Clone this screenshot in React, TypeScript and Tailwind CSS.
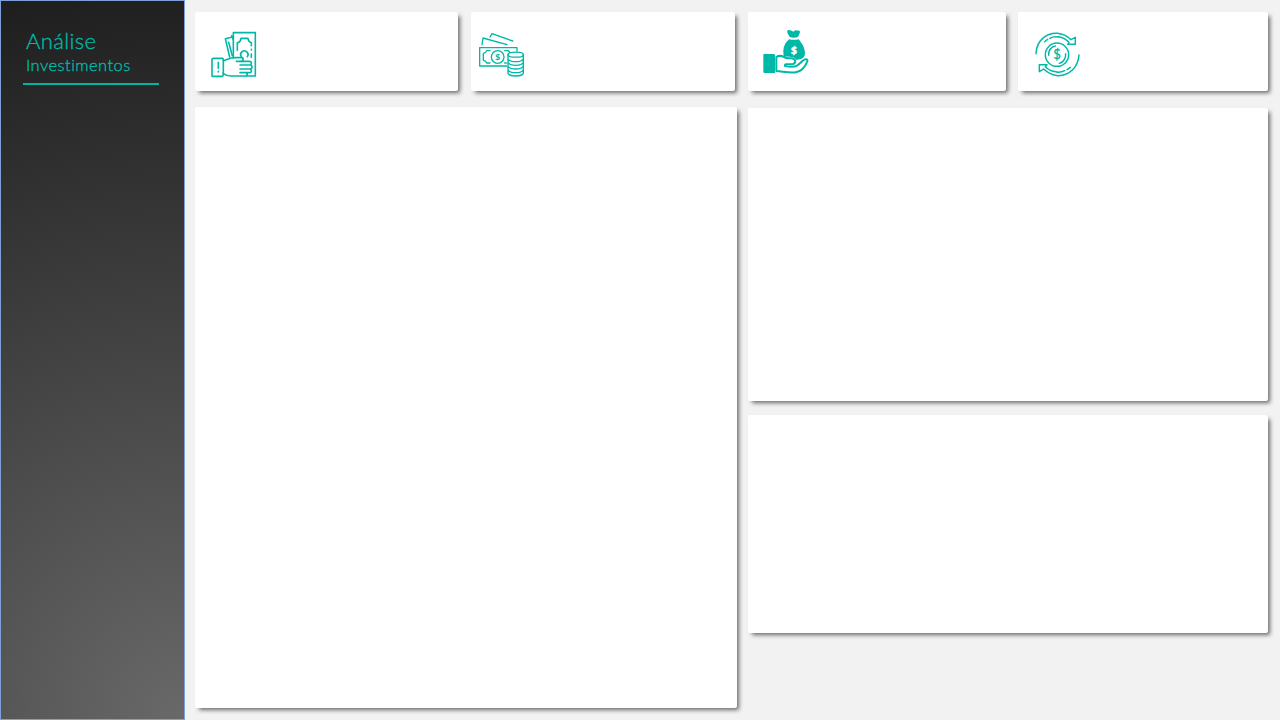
import type { ReactNode } from "react";

const iconClass = "block h-14 w-[60px] shrink-0 text-[#00b8a8]";

function LineIcon({ children }: { children: ReactNode }) {
  return (
    <svg viewBox="0 0 180 168" className={iconClass} fill="none" stroke="currentColor" strokeWidth="4.8" strokeLinejoin="round" strokeLinecap="round">
      {children}
    </svg>
  );
}

function CashInHandIcon() {
  return (
    <LineIcon>
      <path d="M88 99V23H154V153H81Q68 153 57 145" />
      <path d="M88 35 64 41 77 96M83 32 88 44M74 52 85 92" />
      <path d="M55 154H24V103Q24 100 28 100H55Q58 100 58 104V149Q58 154 53 154" />
      <path d="M58 107 82 99Q87 98 94 98H116Q120 104 114 109H97" />
      <path d="M111 109H136Q142 109 142 115T136 120H108M112 120H138Q144 120 144 126T138 132H108M112 132H136Q142 132 142 138T136 143H108M112 143H128Q132 148 127 153" />
      <path d="M100 76V53Q110 51 111 40H132Q133 50 142 53V62M142 73V75M142 87V97" />
      <path d="M112 95A11 11 0 1 1 130 95" />
      <path d="M43 112V130M43 139V141" />
    </LineIcon>
  );
}

function BillsAndCoinsIcon() {
  return (
    <LineIcon>
      <g strokeWidth="4">
        <path d="M104 123H23V68H135V78M30 59 33 39 105 59M54 36 60 26 122 48" />
        <path d="M54 77H44Q42 84 34 85V106Q42 107 44 114H54" />
        <path d="M98 77H108Q112 79 114 83M98 114H103" />
        <circle cx="77" cy="96" r="19" />
        <ellipse cx="131" cy="89" rx="23" ry="7.5" />
        <path d="M108 89V144Q110 153 131 153T154 144V89M108 101Q112 110 131 110T154 101M108 112Q112 121 131 121T154 112M108 123Q112 132 131 132T154 123M108 134Q112 143 131 143T154 134" />
      </g>
      <text x="77" y="105" textAnchor="middle" fill="currentColor" stroke="none" className="font-['Lato'] text-[25px] font-black">$</text>
    </LineIcon>
  );
}

function MoneyBagIcon() {
  return (
    <svg viewBox="0 0 180 168" className={iconClass} fill="currentColor">
      <path d="M101 39 94 26Q92 18 98 18 106 19 112 23 119 17 126 20 132 17 132 25L126 39Q114 44 101 39Z" />
      <path d="M99 46Q114 49 128 46C138 58 147 72 147 88 147 97 142 104 135 105L122 108Q115 98 101 98L83 97Q77 65 99 46Z" />
      <path d="M23 90H53Q57 90 57 94V147H26Q22 147 22 143V94Q22 90 23 90Z" />
      <path d="M61 99C76 89 83 101 95 103H107Q118 105 118 113 117 121 104 121H91Q85 122 87 126 90 128 106 128C125 128 128 121 140 110 149 103 156 105 154 112 149 125 137 142 119 145 104 148 83 143 61 141Z" fill="white" stroke="currentColor" strokeWidth="6" strokeLinejoin="round" />
      <text x="114" y="90" textAnchor="middle" fill="white" stroke="white" strokeWidth="1.5" className="font-['Lato'] text-[30px] font-black">$</text>
    </svg>
  );
}

function MoneyCycleIcon() {
  return (
    <LineIcon>
      <g strokeWidth="4.4">
        <path d="M24 86C26 46 54 24 88 25Q111 27 129 44L142 37V58H119L123 52Q111 38 91 35M153 90C150 129 122 153 89 152Q66 150 47 132L34 140V119H57L52 125Q66 139 84 140" />
        <path d="M50 50Q54 46 59 43M65 40Q77 34 90 36M127 127Q122 131 117 134M110 137Q98 143 86 141" />
        <circle cx="87" cy="89" r="35" />
        <path d="M62 91Q61 68 82 63M113 86Q114 108 94 115" />
      </g>
      <text x="87" y="103" textAnchor="middle" fill="currentColor" stroke="currentColor" strokeWidth="1" className="font-['Lato'] text-[39px]">$</text>
    </LineIcon>
  );
}

function Card({ className, children }: { className: string; children?: ReactNode }) {
  return (
    <div className={`shrink-0 rounded-xs bg-white shadow-[3px_3px_4px_-1px_rgba(0,0,0,0.56)] ${className}`}>
      {children}
    </div>
  );
}

export default function App() {
  return (
    <div className="flex h-[720px] w-[1280px] overflow-hidden bg-[#f2f2f2]">
      <aside className="h-full w-[185px] shrink-0 border border-[#7f9fd8] bg-[radial-gradient(circle_at_bottom_right,#696969,#1e1e1e)] pl-[21.5px] pt-[26px] font-['Lato',sans-serif] font-light text-[#00b8a8] [-webkit-text-stroke:0.35px_#00b8a8]">
        <h1 className="pl-[3.5px] text-[22px] leading-[27px] tracking-[0.4px]">Análise</h1>
        <p className="mt-px pl-[3.5px] text-[16.5px] leading-[20px] tracking-[0.45px] [font-variant-ligatures:none]">Investimentos</p>
        <div className="mt-2 h-0.5 w-[136px] bg-[#00b5a5]" />
      </aside>
      <main className="flex flex-col pl-2.5 pt-3">
        <div className="flex h-[79px]">
          <Card className="mr-[13.4px] w-[263px] pl-[9px] pt-[13px]"><CashInHandIcon /></Card>
          <Card className="mr-[12.6px] w-[264px] pl-[0.6px] pt-[13px]"><BillsAndCoinsIcon /></Card>
          <Card className="mr-3 w-[258px] pl-2 pt-3"><MoneyBagIcon /></Card>
          <Card className="w-[250px] pl-2.5 pt-[13px]"><MoneyCycleIcon /></Card>
        </div>
        <div className="mt-4 flex gap-[11px]">
          <Card className="h-[601px] w-[542px]" />
          <div className="flex flex-col gap-[13.6px] pt-px">
            <Card className="h-[293.4px] w-[520px]" />
            <Card className="h-[218px] w-[520px]" />
          </div>
        </div>
      </main>
    </div>
  );
}
